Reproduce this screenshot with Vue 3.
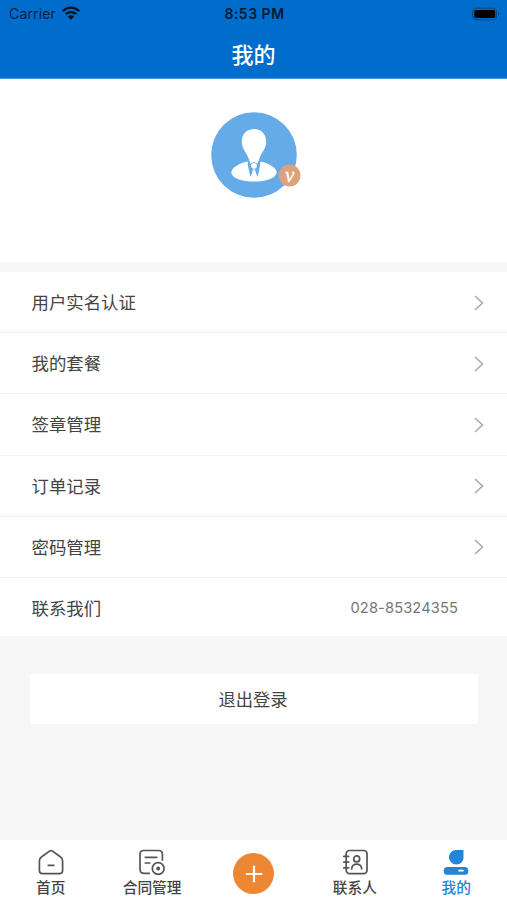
<script setup>
const rows = [
  { label: '用户实名认证' },
  { label: '我的套餐' },
  { label: '签章管理' },
  { label: '订单记录' },
  { label: '密码管理' },
  { label: '联系我们', value: '028-85324355' },
]
</script>

<template>
  <div class="screen">
    <header class="header">
      <div class="status">
        <div class="carrier">
          <span>Carrier</span>
          <svg class="wifi" width="20" height="15" viewBox="0 0 20 15">
            <path d="M1.8 5.2C6.6.4 13.4.4 18.2 5.2" />
            <path d="M4.8 8.2c3-2.8 7.4-2.8 10.4 0" />
            <path class="dot" d="M6.7 10.4c1.9-1.7 4.7-1.7 6.6 0L10 13.8z" />
          </svg>
        </div>
        <span class="time">8:53 PM</span>
        <svg class="battery" width="30" height="14" viewBox="0 0 30 14">
          <rect class="case" x="1.5" y="1.2" width="24" height="11.6" rx="3.4" />
          <rect x="3.2" y="2.9" width="21" height="8.2" rx="1.8" />
          <path class="tip" d="M27 5c1.8.6 1.8 3.4 0 4z" />
        </svg>
      </div>
      <h1 class="title">我的</h1>
    </header>

    <section class="profile">
      <svg class="avatar" width="94" height="88" viewBox="0 0 94 88">
        <circle cx="44" cy="44" r="42.8" fill="#65abe8" />
        <path d="M44 18C36.5 18 31.8 23.5 31.8 30.5C31.8 37.5 36 41 38 46C38.6 49 40.5 50.5 44 50.5C47.5 50.5 49.4 49 50 46C52 41 56.2 37.5 56.2 30.5C56.2 23.5 51.5 18 44 18Z" fill="#fff" />
        <path d="M37.4 50.5C29 52.5 21.6 56.5 21.3 61.5C22 67.5 32 70.6 44 70.6C56 70.6 66 67.5 66.7 61.5C66.4 56.5 59 52.5 50.6 50.5L44 52Z" fill="#fff" />
        <path d="M37.6 50L44 51.8L50.4 50L50 55L47.6 66L44 57.5L40.4 66L38 55Z" fill="#65abe8" />
        <path d="M39 48.5L40.5 53L44 51.5L47.5 53L49 48.5Z" fill="#fff" />
        <circle cx="44" cy="54.8" r="3.6" fill="#65abe8" />
        <circle cx="44" cy="54.8" r="2.9" fill="#fff" />
        <path d="M43 58.6H45L46.8 67H41.2Z" fill="#fff" />
        <circle cx="79.6" cy="64.5" r="10.9" fill="#dda27b" />
        <text x="79.7" y="70.5" class="vip">v</text>
      </svg>
    </section>

    <ul class="menu">
      <li v-for="row in rows" :key="row.label" class="row">
        <span>{{ row.label }}</span>
        <span v-if="row.value" class="phone">{{ row.value }}</span>
        <svg v-else class="chevron" width="12" height="18" viewBox="0 0 12 18">
          <path d="M2 2l7.5 7L2 16" />
        </svg>
      </li>
    </ul>

    <button class="logout">退出登录</button>

    <nav class="tabs">
      <div class="tab">
        <svg class="icon" width="28" height="28" viewBox="0 0 28 28">
          <path d="M4.7 8.8L12.5 3.1Q14 2 15.5 3.1L23.3 8.8Q25.6 10.3 25.6 12.8V22.5Q25.6 25.7 22.4 25.7H5.600Q2.400 25.700 2.400 22.500V12.800Q2.400 10.300 4.700 8.800Z" />
          <path d="M11.2 17.300h5.600" />
        </svg>
        <span>首页</span>
      </div>
      <div class="tab">
        <svg class="icon" width="28" height="28" viewBox="0 0 28 28">
          <path d="M11.3 25.4H6.2Q2 25.4 2 21.2V6.3Q2 2.5 5.8 2.5H20.6Q24.4 2.5 24.4 6.3V12" />
          <path d="M7.3 9.300h11.500M7.300 15h4.500" />
          <circle cx="20.200" cy="20.500" r="5.900" />
          <circle class="fill" cx="20.200" cy="20.500" r="1.900" />
        </svg>
        <span>合同管理</span>
      </div>
      <div class="tab">
        <div class="add">
          <svg width="18" height="18" viewBox="0 0 18 18">
            <path d="M9 .8v16.400M.8 9h16.400" />
          </svg>
        </div>
      </div>
      <div class="tab">
        <svg class="icon" width="28" height="28" viewBox="0 0 28 28">
          <rect x="5.200" y="2.500" width="20.800" height="23.200" rx="3.300" />
          <path d="M2.800 8.400h4.800M2.800 14.100h4.800M2.800 19.900h4.800" />
          <circle cx="15.700" cy="10.900" r="3" />
          <path d="M10.700 20.900c.3-6.500 9.700-6.500 10 0" />
        </svg>
        <span>联系人</span>
      </div>
      <div class="tab active">
        <svg width="28" height="28" viewBox="0 0 28 28">
          <path d="M21.500 2V9.500C21.500 13.700 18.300 16.500 14.300 16.500S7 13.300 7 9.300S10.200 2 14.300 2Z" fill="#2484d6" />
          <rect x="1.700" y="19" width="24.700" height="7.800" rx="3.900" fill="#2484d6" />
          <path d="M17 22.600h4" class="shine" />
        </svg>
        <span>我的</span>
      </div>
    </nav>
  </div>
</template>

<style>
body {
  margin: 0;
}
</style>

<style scoped>
.screen {
  display: flex;
  flex-direction: column;
  width: 507px;
  height: 900px;
  overflow: hidden;
  background: #f6f6f6;
  color: #444;
  font-family: Inter, "Noto Sans CJK SC", sans-serif;
}
.header {
  box-sizing: border-box;
  height: 79px;
  flex: none;
  background: #006dcc;
  border-bottom: 1px solid #3d99df;
}
.status {
  display: grid;
  grid-template-columns: 1fr auto 1fr;
  align-items: center;
  height: 27px;
  padding: 0 6px 0 9px;
  color: #06213d;
  font-size: 14px;
}
.carrier {
  display: flex;
  align-items: center;
  gap: 5px;
  letter-spacing: 0.15px;
}
.time {
  padding-right: 1px;
  color: #001a35;
  font-weight: 600;
  letter-spacing: 0.5px;
}
.wifi path {
  fill: none;
  stroke: #001226;
  stroke-width: 2.4;
}
.wifi .dot {
  fill: #001226;
  stroke: none;
}
.battery {
  justify-self: end;
}
.battery .case {
  fill: none;
  stroke: #07477f;
}
.battery .tip {
  fill: #07477f;
}
.title {
  margin: 0;
  color: #fff;
  font-size: 22px;
  font-weight: 500;
  line-height: 56px;
  text-align: center;
}
.profile {
  box-sizing: border-box;
  flex: none;
  height: 183px;
  padding: 32px 0 0 210px;
  background: #fff;
}
.avatar {
  display: block;
}
.vip {
  fill: #fff;
  font: italic 400 21px "Liberation Serif", serif;
  stroke: #fff;
  stroke-width: 0.3;
  text-anchor: middle;
}
.menu {
  flex: none;
  margin: 10px 0 0;
  padding: 0;
  background: #fff;
  list-style: none;
}
.row {
  box-sizing: border-box;
  display: flex;
  align-items: center;
  justify-content: space-between;
  height: 61.2px;
  padding: 0 22px 1px 31.5px;
  border-bottom: 1px solid #f2f2f2;
  font-size: 17.4px;
}
.row:last-child {
  height: 58.5px;
  padding: 1px 49px 0 31.5px;
  border-bottom: 0;
}
.phone {
  padding-top: 1px;
  color: #777;
  font-size: 14.7px;
  letter-spacing: 0.1px;
}
.chevron {
  margin-top: 2px;
}
.chevron path {
  fill: none;
  stroke: #aaa;
  stroke-width: 1.6;
}
.logout {
  flex: none;
  height: 50px;
  margin: 38px 29px 0 30px;
  padding: 0 2px 2px 0;
  border: 0;
  border-radius: 2px;
  background: #fff;
  color: #444;
  font: inherit;
  font-size: 17.3px;
}
.tabs {
  display: grid;
  grid-template-columns: repeat(5, 1fr);
  flex: none;
  height: 60px;
  margin-top: auto;
  background: #fff;
}
.tab {
  display: flex;
  flex-direction: column;
  align-items: center;
  gap: 2px;
  padding-top: 8px;
  font-size: 14.7px;
  font-weight: 500;
  line-height: 21px;
}
.tab > svg {
  display: block;
}
.icon {
  fill: none;
  stroke: #555;
  stroke-width: 1.7;
  stroke-linecap: round;
  stroke-linejoin: round;
}
.icon .fill {
  fill: #555;
  stroke: none;
}
.add {
  display: grid;
  place-items: center;
  width: 41px;
  height: 41px;
  margin: 5px 0 0 1px;
  border-radius: 50%;
  background: #ed8733;
}
.add path {
  stroke: #fff;
  stroke-width: 2.2;
}
.active {
  color: #2484d6;
}
.shine {
  stroke: #fff;
  stroke-width: 1.8;
  stroke-linecap: round;
}
</style>
